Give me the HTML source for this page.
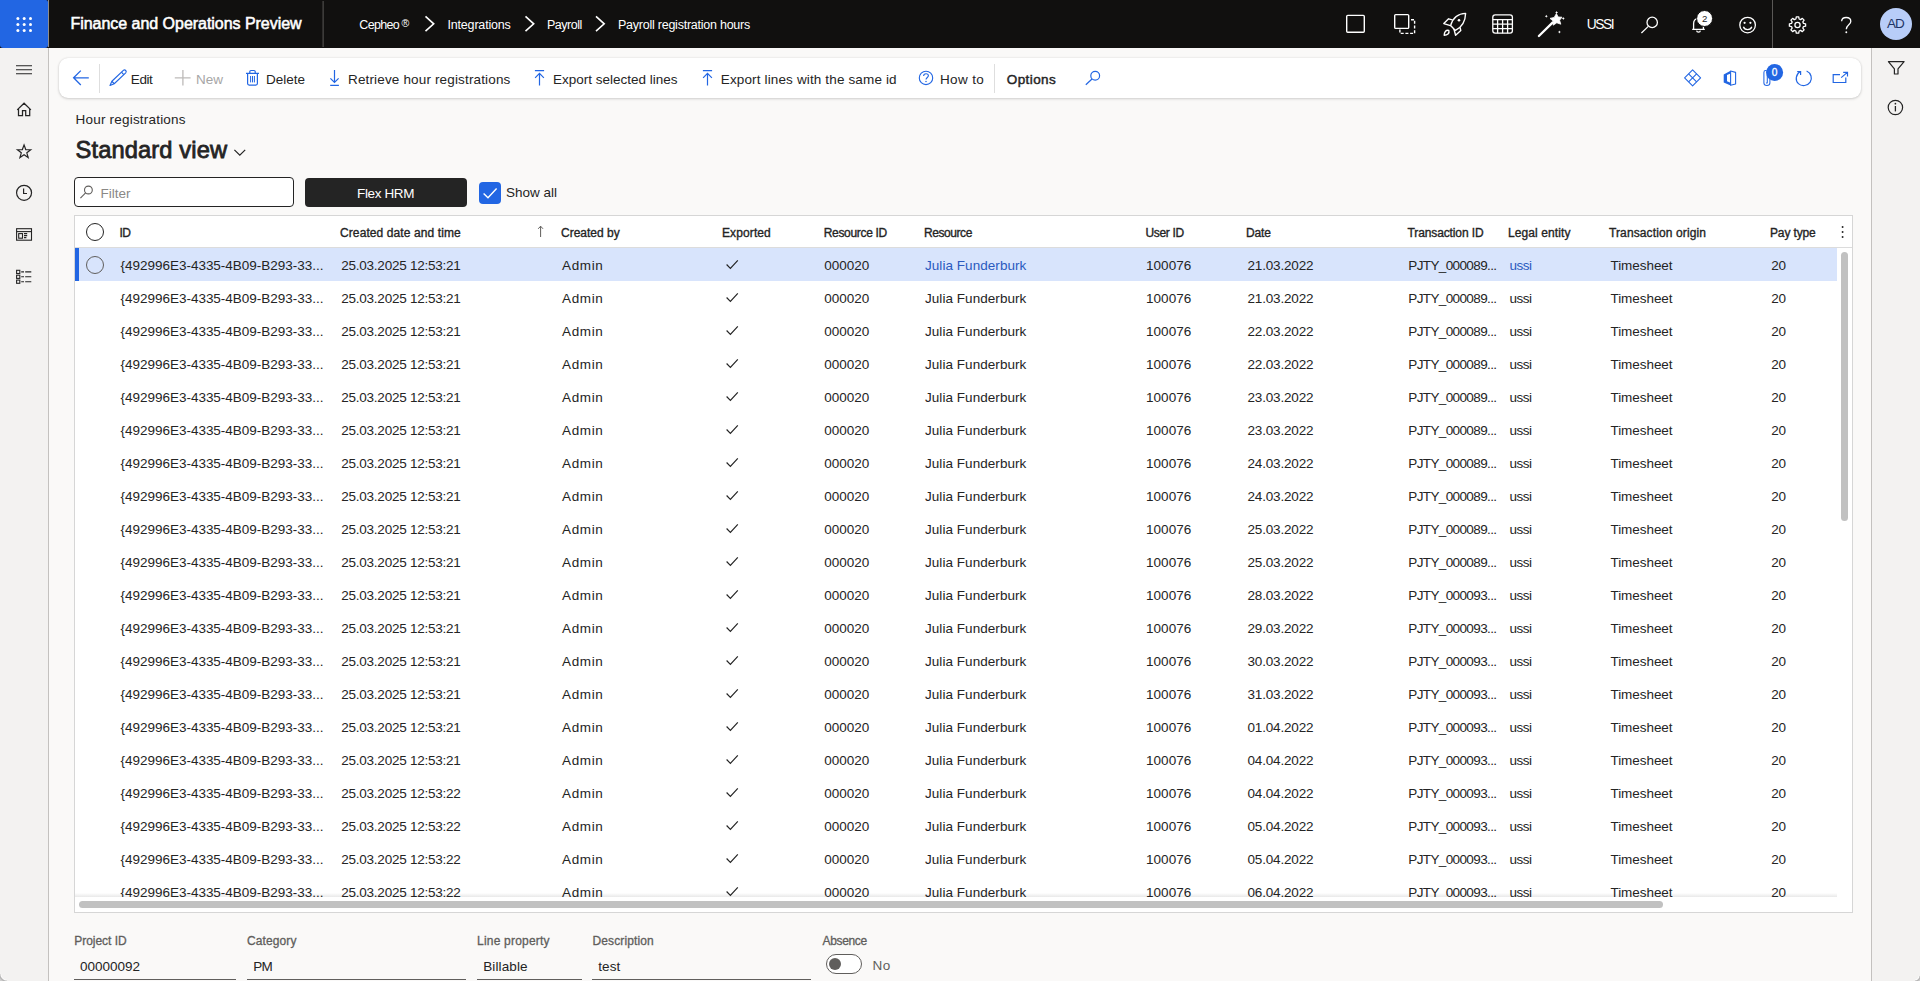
<!DOCTYPE html>
<html><head><meta charset="utf-8"><title>Payroll registration hours</title><style>
*{box-sizing:border-box;margin:0;padding:0}
html,body{width:1920px;height:981px;overflow:hidden}
body{position:relative;background:#faf9f8;font-family:"Liberation Sans", sans-serif;color:#242424}
.t{position:absolute;white-space:pre;line-height:1;display:block}
#hdr{position:absolute;left:0;top:0;width:1920px;height:48px;background:#11100f}
#waffle{position:absolute;left:0;top:0;width:48px;height:48px;background:#2266e3;border-radius:0 2px 3px 3px}
#nav{position:absolute;left:0;top:48px;width:49px;height:933px;background:#f3f2f1;border-right:1px solid #c3c1bf}
#rp{position:absolute;left:1871px;top:48px;width:49px;height:933px;background:#f3f2f1;border-left:1px solid #c3c1bf}
#tb{position:absolute;left:59px;top:58px;width:1802px;height:40px;background:#fff;border-radius:9px;box-shadow:0 1px 3px rgba(0,0,0,.16),0 0 2px rgba(0,0,0,.10)}
#filter{position:absolute;left:74px;top:177px;width:220px;height:30px;background:#fff;border:1px solid #242424;border-radius:4px}
#flex{position:absolute;left:304.5px;top:177.5px;width:162px;height:29px;background:#242424;border-radius:4px}
#cb{position:absolute;left:479px;top:182px;width:22px;height:22px;background:#2266e3;border-radius:4px}
#grid{position:absolute;left:74px;top:215px;width:1779px;height:698px;background:#fff;border:1px solid #d6d6d6}
#hline{position:absolute;left:75px;top:247px;width:1777px;height:1px;background:#dcdcdc}
#sel{position:absolute;left:75px;top:248px;width:1762px;height:33px;background:#d8e4fc}
#selbar{position:absolute;left:75px;top:248px;width:4px;height:33px;background:#2266e3}
#clip{position:absolute;left:0;top:0;width:1920px;height:897px;overflow:hidden}
#fade{position:absolute;left:75px;top:893px;width:1762px;height:4px;background:linear-gradient(#fff,#e9e9e9)}
#vs{position:absolute;left:1841px;top:252px;width:7px;height:269px;background:#c1c1c1;border-radius:4px}
#hs{position:absolute;left:79px;top:901px;width:1584px;height:7px;background:#c1c1c1;border-radius:4px}
.ul{position:absolute;top:979px;height:1px;background:#605e5c}
#tg{position:absolute;left:826px;top:954px;width:36px;height:20px;border:1px solid #605e5c;border-radius:10px;background:#fff}
#tgk{position:absolute;left:829px;top:958px;width:12px;height:12px;border-radius:6px;background:#605e5c}
#av{position:absolute;left:1880px;top:8px;width:32px;height:32px;border-radius:16px;background:#b8cdf8}
#cbl{position:absolute;left:0;top:974px;width:7px;height:7px;background:radial-gradient(circle at 100% 0,rgba(255,255,255,0) 5.4px,rgba(255,255,255,.8) 6px,rgba(150,150,150,.7) 7.2px,rgba(205,205,205,.95) 8.6px)}
#cbr{position:absolute;left:1915px;top:976px;width:5px;height:5px;background:radial-gradient(circle at 0 0,rgba(255,255,255,0) 3.2px,rgba(255,255,255,.8) 3.9px,rgba(150,150,150,.7) 5px,rgba(205,205,205,.95) 6.2px)}
#ov{position:absolute;left:0;top:0;width:1920px;height:981px;pointer-events:none}
</style></head>
<body>
<div id="hdr"><div id="waffle"></div></div>
<div id="nav"></div><div id="rp"></div>
<div id="tb"></div>
<div id="filter"></div><div id="flex"></div><div id="cb"></div>
<div id="grid"></div><div id="hline"></div><div id="sel"></div><div id="selbar"></div>
<div id="av"></div>
<div id="fade"></div>
<div id="clip"><span class="t" style="left:120.50px;top:258.57px;font-size:13.5px;letter-spacing:-0.017px;">{492996E3-4335-4B09-B293-33...</span><span class="t" style="left:341.25px;top:258.57px;font-size:13.5px;letter-spacing:-0.236px;">25.03.2025 12:53:21</span><span class="t" style="left:562.00px;top:258.57px;font-size:13.5px;letter-spacing:0.625px;">Admin</span><span class="t" style="left:824.25px;top:258.57px;font-size:13.5px;">000020</span><span class="t" style="left:925.00px;top:258.57px;font-size:13.5px;letter-spacing:0.050px;color:#2a5abf;">Julia Funderburk</span><span class="t" style="left:1146.00px;top:258.57px;font-size:13.5px;letter-spacing:0.050px;">100076</span><span class="t" style="left:1247.50px;top:258.57px;font-size:13.5px;letter-spacing:-0.167px;">21.03.2022</span><span class="t" style="left:1408.25px;top:258.57px;font-size:13.5px;letter-spacing:-0.615px;">PJTY_000089...</span><span class="t" style="left:1509.50px;top:258.57px;font-size:13.5px;letter-spacing:-0.500px;color:#2a5abf;">ussi</span><span class="t" style="left:1610.50px;top:258.57px;font-size:13.5px;letter-spacing:-0.062px;">Timesheet</span><span class="t" style="left:1771.25px;top:258.57px;font-size:13.5px;letter-spacing:-0.250px;">20</span><span class="t" style="left:120.50px;top:291.57px;font-size:13.5px;letter-spacing:-0.017px;">{492996E3-4335-4B09-B293-33...</span><span class="t" style="left:341.25px;top:291.57px;font-size:13.5px;letter-spacing:-0.236px;">25.03.2025 12:53:21</span><span class="t" style="left:562.00px;top:291.57px;font-size:13.5px;letter-spacing:0.625px;">Admin</span><span class="t" style="left:824.25px;top:291.57px;font-size:13.5px;">000020</span><span class="t" style="left:925.00px;top:291.57px;font-size:13.5px;letter-spacing:0.050px;">Julia Funderburk</span><span class="t" style="left:1146.00px;top:291.57px;font-size:13.5px;letter-spacing:0.050px;">100076</span><span class="t" style="left:1247.50px;top:291.57px;font-size:13.5px;letter-spacing:-0.167px;">21.03.2022</span><span class="t" style="left:1408.25px;top:291.57px;font-size:13.5px;letter-spacing:-0.615px;">PJTY_000089...</span><span class="t" style="left:1509.50px;top:291.57px;font-size:13.5px;letter-spacing:-0.500px;">ussi</span><span class="t" style="left:1610.50px;top:291.57px;font-size:13.5px;letter-spacing:-0.062px;">Timesheet</span><span class="t" style="left:1771.25px;top:291.57px;font-size:13.5px;letter-spacing:-0.250px;">20</span><span class="t" style="left:120.50px;top:324.57px;font-size:13.5px;letter-spacing:-0.017px;">{492996E3-4335-4B09-B293-33...</span><span class="t" style="left:341.25px;top:324.57px;font-size:13.5px;letter-spacing:-0.236px;">25.03.2025 12:53:21</span><span class="t" style="left:562.00px;top:324.57px;font-size:13.5px;letter-spacing:0.625px;">Admin</span><span class="t" style="left:824.25px;top:324.57px;font-size:13.5px;">000020</span><span class="t" style="left:925.00px;top:324.57px;font-size:13.5px;letter-spacing:0.050px;">Julia Funderburk</span><span class="t" style="left:1146.00px;top:324.57px;font-size:13.5px;letter-spacing:0.050px;">100076</span><span class="t" style="left:1247.50px;top:324.57px;font-size:13.5px;letter-spacing:-0.167px;">22.03.2022</span><span class="t" style="left:1408.25px;top:324.57px;font-size:13.5px;letter-spacing:-0.615px;">PJTY_000089...</span><span class="t" style="left:1509.50px;top:324.57px;font-size:13.5px;letter-spacing:-0.500px;">ussi</span><span class="t" style="left:1610.50px;top:324.57px;font-size:13.5px;letter-spacing:-0.062px;">Timesheet</span><span class="t" style="left:1771.25px;top:324.57px;font-size:13.5px;letter-spacing:-0.250px;">20</span><span class="t" style="left:120.50px;top:357.57px;font-size:13.5px;letter-spacing:-0.017px;">{492996E3-4335-4B09-B293-33...</span><span class="t" style="left:341.25px;top:357.57px;font-size:13.5px;letter-spacing:-0.236px;">25.03.2025 12:53:21</span><span class="t" style="left:562.00px;top:357.57px;font-size:13.5px;letter-spacing:0.625px;">Admin</span><span class="t" style="left:824.25px;top:357.57px;font-size:13.5px;">000020</span><span class="t" style="left:925.00px;top:357.57px;font-size:13.5px;letter-spacing:0.050px;">Julia Funderburk</span><span class="t" style="left:1146.00px;top:357.57px;font-size:13.5px;letter-spacing:0.050px;">100076</span><span class="t" style="left:1247.50px;top:357.57px;font-size:13.5px;letter-spacing:-0.167px;">22.03.2022</span><span class="t" style="left:1408.25px;top:357.57px;font-size:13.5px;letter-spacing:-0.615px;">PJTY_000089...</span><span class="t" style="left:1509.50px;top:357.57px;font-size:13.5px;letter-spacing:-0.500px;">ussi</span><span class="t" style="left:1610.50px;top:357.57px;font-size:13.5px;letter-spacing:-0.062px;">Timesheet</span><span class="t" style="left:1771.25px;top:357.57px;font-size:13.5px;letter-spacing:-0.250px;">20</span><span class="t" style="left:120.50px;top:390.57px;font-size:13.5px;letter-spacing:-0.017px;">{492996E3-4335-4B09-B293-33...</span><span class="t" style="left:341.25px;top:390.57px;font-size:13.5px;letter-spacing:-0.236px;">25.03.2025 12:53:21</span><span class="t" style="left:562.00px;top:390.57px;font-size:13.5px;letter-spacing:0.625px;">Admin</span><span class="t" style="left:824.25px;top:390.57px;font-size:13.5px;">000020</span><span class="t" style="left:925.00px;top:390.57px;font-size:13.5px;letter-spacing:0.050px;">Julia Funderburk</span><span class="t" style="left:1146.00px;top:390.57px;font-size:13.5px;letter-spacing:0.050px;">100076</span><span class="t" style="left:1247.50px;top:390.57px;font-size:13.5px;letter-spacing:-0.167px;">23.03.2022</span><span class="t" style="left:1408.25px;top:390.57px;font-size:13.5px;letter-spacing:-0.615px;">PJTY_000089...</span><span class="t" style="left:1509.50px;top:390.57px;font-size:13.5px;letter-spacing:-0.500px;">ussi</span><span class="t" style="left:1610.50px;top:390.57px;font-size:13.5px;letter-spacing:-0.062px;">Timesheet</span><span class="t" style="left:1771.25px;top:390.57px;font-size:13.5px;letter-spacing:-0.250px;">20</span><span class="t" style="left:120.50px;top:423.57px;font-size:13.5px;letter-spacing:-0.017px;">{492996E3-4335-4B09-B293-33...</span><span class="t" style="left:341.25px;top:423.57px;font-size:13.5px;letter-spacing:-0.236px;">25.03.2025 12:53:21</span><span class="t" style="left:562.00px;top:423.57px;font-size:13.5px;letter-spacing:0.625px;">Admin</span><span class="t" style="left:824.25px;top:423.57px;font-size:13.5px;">000020</span><span class="t" style="left:925.00px;top:423.57px;font-size:13.5px;letter-spacing:0.050px;">Julia Funderburk</span><span class="t" style="left:1146.00px;top:423.57px;font-size:13.5px;letter-spacing:0.050px;">100076</span><span class="t" style="left:1247.50px;top:423.57px;font-size:13.5px;letter-spacing:-0.167px;">23.03.2022</span><span class="t" style="left:1408.25px;top:423.57px;font-size:13.5px;letter-spacing:-0.615px;">PJTY_000089...</span><span class="t" style="left:1509.50px;top:423.57px;font-size:13.5px;letter-spacing:-0.500px;">ussi</span><span class="t" style="left:1610.50px;top:423.57px;font-size:13.5px;letter-spacing:-0.062px;">Timesheet</span><span class="t" style="left:1771.25px;top:423.57px;font-size:13.5px;letter-spacing:-0.250px;">20</span><span class="t" style="left:120.50px;top:456.57px;font-size:13.5px;letter-spacing:-0.017px;">{492996E3-4335-4B09-B293-33...</span><span class="t" style="left:341.25px;top:456.57px;font-size:13.5px;letter-spacing:-0.236px;">25.03.2025 12:53:21</span><span class="t" style="left:562.00px;top:456.57px;font-size:13.5px;letter-spacing:0.625px;">Admin</span><span class="t" style="left:824.25px;top:456.57px;font-size:13.5px;">000020</span><span class="t" style="left:925.00px;top:456.57px;font-size:13.5px;letter-spacing:0.050px;">Julia Funderburk</span><span class="t" style="left:1146.00px;top:456.57px;font-size:13.5px;letter-spacing:0.050px;">100076</span><span class="t" style="left:1247.50px;top:456.57px;font-size:13.5px;letter-spacing:-0.167px;">24.03.2022</span><span class="t" style="left:1408.25px;top:456.57px;font-size:13.5px;letter-spacing:-0.615px;">PJTY_000089...</span><span class="t" style="left:1509.50px;top:456.57px;font-size:13.5px;letter-spacing:-0.500px;">ussi</span><span class="t" style="left:1610.50px;top:456.57px;font-size:13.5px;letter-spacing:-0.062px;">Timesheet</span><span class="t" style="left:1771.25px;top:456.57px;font-size:13.5px;letter-spacing:-0.250px;">20</span><span class="t" style="left:120.50px;top:489.57px;font-size:13.5px;letter-spacing:-0.017px;">{492996E3-4335-4B09-B293-33...</span><span class="t" style="left:341.25px;top:489.57px;font-size:13.5px;letter-spacing:-0.236px;">25.03.2025 12:53:21</span><span class="t" style="left:562.00px;top:489.57px;font-size:13.5px;letter-spacing:0.625px;">Admin</span><span class="t" style="left:824.25px;top:489.57px;font-size:13.5px;">000020</span><span class="t" style="left:925.00px;top:489.57px;font-size:13.5px;letter-spacing:0.050px;">Julia Funderburk</span><span class="t" style="left:1146.00px;top:489.57px;font-size:13.5px;letter-spacing:0.050px;">100076</span><span class="t" style="left:1247.50px;top:489.57px;font-size:13.5px;letter-spacing:-0.167px;">24.03.2022</span><span class="t" style="left:1408.25px;top:489.57px;font-size:13.5px;letter-spacing:-0.615px;">PJTY_000089...</span><span class="t" style="left:1509.50px;top:489.57px;font-size:13.5px;letter-spacing:-0.500px;">ussi</span><span class="t" style="left:1610.50px;top:489.57px;font-size:13.5px;letter-spacing:-0.062px;">Timesheet</span><span class="t" style="left:1771.25px;top:489.57px;font-size:13.5px;letter-spacing:-0.250px;">20</span><span class="t" style="left:120.50px;top:522.57px;font-size:13.5px;letter-spacing:-0.017px;">{492996E3-4335-4B09-B293-33...</span><span class="t" style="left:341.25px;top:522.57px;font-size:13.5px;letter-spacing:-0.236px;">25.03.2025 12:53:21</span><span class="t" style="left:562.00px;top:522.57px;font-size:13.5px;letter-spacing:0.625px;">Admin</span><span class="t" style="left:824.25px;top:522.57px;font-size:13.5px;">000020</span><span class="t" style="left:925.00px;top:522.57px;font-size:13.5px;letter-spacing:0.050px;">Julia Funderburk</span><span class="t" style="left:1146.00px;top:522.57px;font-size:13.5px;letter-spacing:0.050px;">100076</span><span class="t" style="left:1247.50px;top:522.57px;font-size:13.5px;letter-spacing:-0.167px;">25.03.2022</span><span class="t" style="left:1408.25px;top:522.57px;font-size:13.5px;letter-spacing:-0.615px;">PJTY_000089...</span><span class="t" style="left:1509.50px;top:522.57px;font-size:13.5px;letter-spacing:-0.500px;">ussi</span><span class="t" style="left:1610.50px;top:522.57px;font-size:13.5px;letter-spacing:-0.062px;">Timesheet</span><span class="t" style="left:1771.25px;top:522.57px;font-size:13.5px;letter-spacing:-0.250px;">20</span><span class="t" style="left:120.50px;top:555.57px;font-size:13.5px;letter-spacing:-0.017px;">{492996E3-4335-4B09-B293-33...</span><span class="t" style="left:341.25px;top:555.57px;font-size:13.5px;letter-spacing:-0.236px;">25.03.2025 12:53:21</span><span class="t" style="left:562.00px;top:555.57px;font-size:13.5px;letter-spacing:0.625px;">Admin</span><span class="t" style="left:824.25px;top:555.57px;font-size:13.5px;">000020</span><span class="t" style="left:925.00px;top:555.57px;font-size:13.5px;letter-spacing:0.050px;">Julia Funderburk</span><span class="t" style="left:1146.00px;top:555.57px;font-size:13.5px;letter-spacing:0.050px;">100076</span><span class="t" style="left:1247.50px;top:555.57px;font-size:13.5px;letter-spacing:-0.167px;">25.03.2022</span><span class="t" style="left:1408.25px;top:555.57px;font-size:13.5px;letter-spacing:-0.615px;">PJTY_000089...</span><span class="t" style="left:1509.50px;top:555.57px;font-size:13.5px;letter-spacing:-0.500px;">ussi</span><span class="t" style="left:1610.50px;top:555.57px;font-size:13.5px;letter-spacing:-0.062px;">Timesheet</span><span class="t" style="left:1771.25px;top:555.57px;font-size:13.5px;letter-spacing:-0.250px;">20</span><span class="t" style="left:120.50px;top:588.57px;font-size:13.5px;letter-spacing:-0.017px;">{492996E3-4335-4B09-B293-33...</span><span class="t" style="left:341.25px;top:588.57px;font-size:13.5px;letter-spacing:-0.236px;">25.03.2025 12:53:21</span><span class="t" style="left:562.00px;top:588.57px;font-size:13.5px;letter-spacing:0.625px;">Admin</span><span class="t" style="left:824.25px;top:588.57px;font-size:13.5px;">000020</span><span class="t" style="left:925.00px;top:588.57px;font-size:13.5px;letter-spacing:0.050px;">Julia Funderburk</span><span class="t" style="left:1146.00px;top:588.57px;font-size:13.5px;letter-spacing:0.050px;">100076</span><span class="t" style="left:1247.50px;top:588.57px;font-size:13.5px;letter-spacing:-0.167px;">28.03.2022</span><span class="t" style="left:1408.25px;top:588.57px;font-size:13.5px;letter-spacing:-0.615px;">PJTY_000093...</span><span class="t" style="left:1509.50px;top:588.57px;font-size:13.5px;letter-spacing:-0.500px;">ussi</span><span class="t" style="left:1610.50px;top:588.57px;font-size:13.5px;letter-spacing:-0.062px;">Timesheet</span><span class="t" style="left:1771.25px;top:588.57px;font-size:13.5px;letter-spacing:-0.250px;">20</span><span class="t" style="left:120.50px;top:621.57px;font-size:13.5px;letter-spacing:-0.017px;">{492996E3-4335-4B09-B293-33...</span><span class="t" style="left:341.25px;top:621.57px;font-size:13.5px;letter-spacing:-0.236px;">25.03.2025 12:53:21</span><span class="t" style="left:562.00px;top:621.57px;font-size:13.5px;letter-spacing:0.625px;">Admin</span><span class="t" style="left:824.25px;top:621.57px;font-size:13.5px;">000020</span><span class="t" style="left:925.00px;top:621.57px;font-size:13.5px;letter-spacing:0.050px;">Julia Funderburk</span><span class="t" style="left:1146.00px;top:621.57px;font-size:13.5px;letter-spacing:0.050px;">100076</span><span class="t" style="left:1247.50px;top:621.57px;font-size:13.5px;letter-spacing:-0.167px;">29.03.2022</span><span class="t" style="left:1408.25px;top:621.57px;font-size:13.5px;letter-spacing:-0.615px;">PJTY_000093...</span><span class="t" style="left:1509.50px;top:621.57px;font-size:13.5px;letter-spacing:-0.500px;">ussi</span><span class="t" style="left:1610.50px;top:621.57px;font-size:13.5px;letter-spacing:-0.062px;">Timesheet</span><span class="t" style="left:1771.25px;top:621.57px;font-size:13.5px;letter-spacing:-0.250px;">20</span><span class="t" style="left:120.50px;top:654.57px;font-size:13.5px;letter-spacing:-0.017px;">{492996E3-4335-4B09-B293-33...</span><span class="t" style="left:341.25px;top:654.57px;font-size:13.5px;letter-spacing:-0.236px;">25.03.2025 12:53:21</span><span class="t" style="left:562.00px;top:654.57px;font-size:13.5px;letter-spacing:0.625px;">Admin</span><span class="t" style="left:824.25px;top:654.57px;font-size:13.5px;">000020</span><span class="t" style="left:925.00px;top:654.57px;font-size:13.5px;letter-spacing:0.050px;">Julia Funderburk</span><span class="t" style="left:1146.00px;top:654.57px;font-size:13.5px;letter-spacing:0.050px;">100076</span><span class="t" style="left:1247.50px;top:654.57px;font-size:13.5px;letter-spacing:-0.167px;">30.03.2022</span><span class="t" style="left:1408.25px;top:654.57px;font-size:13.5px;letter-spacing:-0.615px;">PJTY_000093...</span><span class="t" style="left:1509.50px;top:654.57px;font-size:13.5px;letter-spacing:-0.500px;">ussi</span><span class="t" style="left:1610.50px;top:654.57px;font-size:13.5px;letter-spacing:-0.062px;">Timesheet</span><span class="t" style="left:1771.25px;top:654.57px;font-size:13.5px;letter-spacing:-0.250px;">20</span><span class="t" style="left:120.50px;top:687.57px;font-size:13.5px;letter-spacing:-0.017px;">{492996E3-4335-4B09-B293-33...</span><span class="t" style="left:341.25px;top:687.57px;font-size:13.5px;letter-spacing:-0.236px;">25.03.2025 12:53:21</span><span class="t" style="left:562.00px;top:687.57px;font-size:13.5px;letter-spacing:0.625px;">Admin</span><span class="t" style="left:824.25px;top:687.57px;font-size:13.5px;">000020</span><span class="t" style="left:925.00px;top:687.57px;font-size:13.5px;letter-spacing:0.050px;">Julia Funderburk</span><span class="t" style="left:1146.00px;top:687.57px;font-size:13.5px;letter-spacing:0.050px;">100076</span><span class="t" style="left:1247.50px;top:687.57px;font-size:13.5px;letter-spacing:-0.167px;">31.03.2022</span><span class="t" style="left:1408.25px;top:687.57px;font-size:13.5px;letter-spacing:-0.615px;">PJTY_000093...</span><span class="t" style="left:1509.50px;top:687.57px;font-size:13.5px;letter-spacing:-0.500px;">ussi</span><span class="t" style="left:1610.50px;top:687.57px;font-size:13.5px;letter-spacing:-0.062px;">Timesheet</span><span class="t" style="left:1771.25px;top:687.57px;font-size:13.5px;letter-spacing:-0.250px;">20</span><span class="t" style="left:120.50px;top:720.57px;font-size:13.5px;letter-spacing:-0.017px;">{492996E3-4335-4B09-B293-33...</span><span class="t" style="left:341.25px;top:720.57px;font-size:13.5px;letter-spacing:-0.236px;">25.03.2025 12:53:21</span><span class="t" style="left:562.00px;top:720.57px;font-size:13.5px;letter-spacing:0.625px;">Admin</span><span class="t" style="left:824.25px;top:720.57px;font-size:13.5px;">000020</span><span class="t" style="left:925.00px;top:720.57px;font-size:13.5px;letter-spacing:0.050px;">Julia Funderburk</span><span class="t" style="left:1146.00px;top:720.57px;font-size:13.5px;letter-spacing:0.050px;">100076</span><span class="t" style="left:1247.50px;top:720.57px;font-size:13.5px;letter-spacing:-0.167px;">01.04.2022</span><span class="t" style="left:1408.25px;top:720.57px;font-size:13.5px;letter-spacing:-0.615px;">PJTY_000093...</span><span class="t" style="left:1509.50px;top:720.57px;font-size:13.5px;letter-spacing:-0.500px;">ussi</span><span class="t" style="left:1610.50px;top:720.57px;font-size:13.5px;letter-spacing:-0.062px;">Timesheet</span><span class="t" style="left:1771.25px;top:720.57px;font-size:13.5px;letter-spacing:-0.250px;">20</span><span class="t" style="left:120.50px;top:753.57px;font-size:13.5px;letter-spacing:-0.017px;">{492996E3-4335-4B09-B293-33...</span><span class="t" style="left:341.25px;top:753.57px;font-size:13.5px;letter-spacing:-0.236px;">25.03.2025 12:53:21</span><span class="t" style="left:562.00px;top:753.57px;font-size:13.5px;letter-spacing:0.625px;">Admin</span><span class="t" style="left:824.25px;top:753.57px;font-size:13.5px;">000020</span><span class="t" style="left:925.00px;top:753.57px;font-size:13.5px;letter-spacing:0.050px;">Julia Funderburk</span><span class="t" style="left:1146.00px;top:753.57px;font-size:13.5px;letter-spacing:0.050px;">100076</span><span class="t" style="left:1247.50px;top:753.57px;font-size:13.5px;letter-spacing:-0.167px;">04.04.2022</span><span class="t" style="left:1408.25px;top:753.57px;font-size:13.5px;letter-spacing:-0.615px;">PJTY_000093...</span><span class="t" style="left:1509.50px;top:753.57px;font-size:13.5px;letter-spacing:-0.500px;">ussi</span><span class="t" style="left:1610.50px;top:753.57px;font-size:13.5px;letter-spacing:-0.062px;">Timesheet</span><span class="t" style="left:1771.25px;top:753.57px;font-size:13.5px;letter-spacing:-0.250px;">20</span><span class="t" style="left:120.50px;top:786.57px;font-size:13.5px;letter-spacing:-0.017px;">{492996E3-4335-4B09-B293-33...</span><span class="t" style="left:341.25px;top:786.57px;font-size:13.5px;letter-spacing:-0.236px;">25.03.2025 12:53:22</span><span class="t" style="left:562.00px;top:786.57px;font-size:13.5px;letter-spacing:0.625px;">Admin</span><span class="t" style="left:824.25px;top:786.57px;font-size:13.5px;">000020</span><span class="t" style="left:925.00px;top:786.57px;font-size:13.5px;letter-spacing:0.050px;">Julia Funderburk</span><span class="t" style="left:1146.00px;top:786.57px;font-size:13.5px;letter-spacing:0.050px;">100076</span><span class="t" style="left:1247.50px;top:786.57px;font-size:13.5px;letter-spacing:-0.167px;">04.04.2022</span><span class="t" style="left:1408.25px;top:786.57px;font-size:13.5px;letter-spacing:-0.615px;">PJTY_000093...</span><span class="t" style="left:1509.50px;top:786.57px;font-size:13.5px;letter-spacing:-0.500px;">ussi</span><span class="t" style="left:1610.50px;top:786.57px;font-size:13.5px;letter-spacing:-0.062px;">Timesheet</span><span class="t" style="left:1771.25px;top:786.57px;font-size:13.5px;letter-spacing:-0.250px;">20</span><span class="t" style="left:120.50px;top:819.57px;font-size:13.5px;letter-spacing:-0.017px;">{492996E3-4335-4B09-B293-33...</span><span class="t" style="left:341.25px;top:819.57px;font-size:13.5px;letter-spacing:-0.236px;">25.03.2025 12:53:22</span><span class="t" style="left:562.00px;top:819.57px;font-size:13.5px;letter-spacing:0.625px;">Admin</span><span class="t" style="left:824.25px;top:819.57px;font-size:13.5px;">000020</span><span class="t" style="left:925.00px;top:819.57px;font-size:13.5px;letter-spacing:0.050px;">Julia Funderburk</span><span class="t" style="left:1146.00px;top:819.57px;font-size:13.5px;letter-spacing:0.050px;">100076</span><span class="t" style="left:1247.50px;top:819.57px;font-size:13.5px;letter-spacing:-0.167px;">05.04.2022</span><span class="t" style="left:1408.25px;top:819.57px;font-size:13.5px;letter-spacing:-0.615px;">PJTY_000093...</span><span class="t" style="left:1509.50px;top:819.57px;font-size:13.5px;letter-spacing:-0.500px;">ussi</span><span class="t" style="left:1610.50px;top:819.57px;font-size:13.5px;letter-spacing:-0.062px;">Timesheet</span><span class="t" style="left:1771.25px;top:819.57px;font-size:13.5px;letter-spacing:-0.250px;">20</span><span class="t" style="left:120.50px;top:852.57px;font-size:13.5px;letter-spacing:-0.017px;">{492996E3-4335-4B09-B293-33...</span><span class="t" style="left:341.25px;top:852.57px;font-size:13.5px;letter-spacing:-0.236px;">25.03.2025 12:53:22</span><span class="t" style="left:562.00px;top:852.57px;font-size:13.5px;letter-spacing:0.625px;">Admin</span><span class="t" style="left:824.25px;top:852.57px;font-size:13.5px;">000020</span><span class="t" style="left:925.00px;top:852.57px;font-size:13.5px;letter-spacing:0.050px;">Julia Funderburk</span><span class="t" style="left:1146.00px;top:852.57px;font-size:13.5px;letter-spacing:0.050px;">100076</span><span class="t" style="left:1247.50px;top:852.57px;font-size:13.5px;letter-spacing:-0.167px;">05.04.2022</span><span class="t" style="left:1408.25px;top:852.57px;font-size:13.5px;letter-spacing:-0.615px;">PJTY_000093...</span><span class="t" style="left:1509.50px;top:852.57px;font-size:13.5px;letter-spacing:-0.500px;">ussi</span><span class="t" style="left:1610.50px;top:852.57px;font-size:13.5px;letter-spacing:-0.062px;">Timesheet</span><span class="t" style="left:1771.25px;top:852.57px;font-size:13.5px;letter-spacing:-0.250px;">20</span><span class="t" style="left:120.50px;top:885.57px;font-size:13.5px;letter-spacing:-0.017px;">{492996E3-4335-4B09-B293-33...</span><span class="t" style="left:341.25px;top:885.57px;font-size:13.5px;letter-spacing:-0.236px;">25.03.2025 12:53:22</span><span class="t" style="left:562.00px;top:885.57px;font-size:13.5px;letter-spacing:0.625px;">Admin</span><span class="t" style="left:824.25px;top:885.57px;font-size:13.5px;">000020</span><span class="t" style="left:925.00px;top:885.57px;font-size:13.5px;letter-spacing:0.050px;">Julia Funderburk</span><span class="t" style="left:1146.00px;top:885.57px;font-size:13.5px;letter-spacing:0.050px;">100076</span><span class="t" style="left:1247.50px;top:885.57px;font-size:13.5px;letter-spacing:-0.167px;">06.04.2022</span><span class="t" style="left:1408.25px;top:885.57px;font-size:13.5px;letter-spacing:-0.615px;">PJTY_000093...</span><span class="t" style="left:1509.50px;top:885.57px;font-size:13.5px;letter-spacing:-0.500px;">ussi</span><span class="t" style="left:1610.50px;top:885.57px;font-size:13.5px;letter-spacing:-0.062px;">Timesheet</span><span class="t" style="left:1771.25px;top:885.57px;font-size:13.5px;letter-spacing:-0.250px;">20</span><svg style="position:absolute;left:0;top:0" width="1920" height="981" viewBox="0 0 1920 981"><path d="M726.6,264.5 L730.4,268.3 L737.8,260.3" fill="none" stroke="#242424" stroke-width="1.2"/><path d="M726.6,297.5 L730.4,301.3 L737.8,293.3" fill="none" stroke="#242424" stroke-width="1.2"/><path d="M726.6,330.5 L730.4,334.3 L737.8,326.3" fill="none" stroke="#242424" stroke-width="1.2"/><path d="M726.6,363.5 L730.4,367.3 L737.8,359.3" fill="none" stroke="#242424" stroke-width="1.2"/><path d="M726.6,396.5 L730.4,400.3 L737.8,392.3" fill="none" stroke="#242424" stroke-width="1.2"/><path d="M726.6,429.5 L730.4,433.3 L737.8,425.3" fill="none" stroke="#242424" stroke-width="1.2"/><path d="M726.6,462.5 L730.4,466.3 L737.8,458.3" fill="none" stroke="#242424" stroke-width="1.2"/><path d="M726.6,495.5 L730.4,499.3 L737.8,491.3" fill="none" stroke="#242424" stroke-width="1.2"/><path d="M726.6,528.5 L730.4,532.3 L737.8,524.3" fill="none" stroke="#242424" stroke-width="1.2"/><path d="M726.6,561.5 L730.4,565.3 L737.8,557.3" fill="none" stroke="#242424" stroke-width="1.2"/><path d="M726.6,594.5 L730.4,598.3 L737.8,590.3" fill="none" stroke="#242424" stroke-width="1.2"/><path d="M726.6,627.5 L730.4,631.3 L737.8,623.3" fill="none" stroke="#242424" stroke-width="1.2"/><path d="M726.6,660.5 L730.4,664.3 L737.8,656.3" fill="none" stroke="#242424" stroke-width="1.2"/><path d="M726.6,693.5 L730.4,697.3 L737.8,689.3" fill="none" stroke="#242424" stroke-width="1.2"/><path d="M726.6,726.5 L730.4,730.3 L737.8,722.3" fill="none" stroke="#242424" stroke-width="1.2"/><path d="M726.6,759.5 L730.4,763.3 L737.8,755.3" fill="none" stroke="#242424" stroke-width="1.2"/><path d="M726.6,792.5 L730.4,796.3 L737.8,788.3" fill="none" stroke="#242424" stroke-width="1.2"/><path d="M726.6,825.5 L730.4,829.3 L737.8,821.3" fill="none" stroke="#242424" stroke-width="1.2"/><path d="M726.6,858.5 L730.4,862.3 L737.8,854.3" fill="none" stroke="#242424" stroke-width="1.2"/><path d="M726.6,891.5 L730.4,895.3 L737.8,887.3" fill="none" stroke="#242424" stroke-width="1.2"/></svg></div>
<div id="vs"></div><div id="hs"></div>
<div class="ul" style="left:74px;width:162px"></div><div class="ul" style="left:247px;width:219px"></div><div class="ul" style="left:477px;width:105px"></div><div class="ul" style="left:592px;width:219px"></div>
<div id="cbl"></div><div id="cbr"></div><div id="tg"></div><div id="tgk"></div>
<svg id="ov" width="1920" height="981" viewBox="0 0 1920 981"><circle cx="17.9" cy="18.6" r="1.5" fill="#fff"/><circle cx="17.9" cy="24.6" r="1.5" fill="#fff"/><circle cx="17.9" cy="30.6" r="1.5" fill="#fff"/><circle cx="24.2" cy="18.6" r="1.5" fill="#fff"/><circle cx="24.2" cy="24.6" r="1.5" fill="#fff"/><circle cx="24.2" cy="30.6" r="1.5" fill="#fff"/><circle cx="30.5" cy="18.6" r="1.5" fill="#fff"/><circle cx="30.5" cy="24.6" r="1.5" fill="#fff"/><circle cx="30.5" cy="30.6" r="1.5" fill="#fff"/><rect x="48" y="0" width="1" height="47" fill="#8f8d8b"/><rect x="322.6" y="1" width="1" height="46" fill="#5a5856"/><rect x="1772" y="0" width="1" height="48" fill="#5a5856"/><path d="M425.5,16.4 L433.7,23.8 L425.5,31.2" fill="none" stroke="#fff" stroke-width="1.6"/><path d="M525.5,16.4 L533.7,23.8 L525.5,31.2" fill="none" stroke="#fff" stroke-width="1.6"/><path d="M596,16.4 L604.2,23.8 L596,31.2" fill="none" stroke="#fff" stroke-width="1.6"/><rect x="1346.7" y="15.4" width="17.6" height="16.8" rx="1" fill="none" stroke="#fff" stroke-width="1.4"/><rect x="1394.7" y="14.6" width="14" height="13.8" rx="1" fill="none" stroke="#fff" stroke-width="1.4"/><path d="M1411,19.7 H1414.6 V33.4 H1399.9 V29.4" fill="none" stroke="#fff" stroke-width="1.4" stroke-dasharray="3 1.7"/><g fill="none" stroke="#fff" stroke-width="1.4" stroke-linejoin="round" stroke-linecap="round"><path d="M1465.6,13.4 C1458.5,13.6 1453,17.5 1450.6,25.6 L1455.4,30.4 C1462,27 1465.4,20.8 1465.6,13.4 Z"/><path d="M1452.2,19.8 L1448.6,18.8 L1443.8,23.6 L1450.4,25.6"/><path d="M1460.2,28 L1460.8,30.6 L1455.6,35.2 L1454,29.4"/><path d="M1448.8,30.4 C1446.2,29.6 1444.2,32 1444.2,35.2 C1447.2,35.2 1449.8,33.4 1448.8,30.4 Z"/></g><circle cx="1459" cy="20.2" r="1.3" fill="#fff"/><g fill="none" stroke="#fff" stroke-width="1.3"><rect x="1492.8" y="14.8" width="19.6" height="18.4" rx="2.4"/><path d="M1492.8,19.6 H1512.4 M1492.8,24.2 H1512.4 M1492.8,28.7 H1512.4 M1497.6,19.6 V33.2 M1502.6,19.6 V33.2 M1507.6,19.6 V33.2"/></g><path d="M1538.9,36 L1552.8,22.4" stroke="#fff" stroke-width="2.3" fill="none" stroke-linecap="round"/><path d="M1556.4,13.6 L1558.2,17 L1562,17.2 L1559.6,20.2 L1560.8,24.2 L1556.8,22.8 L1553.2,25.2 L1553.2,21 L1550,18.4 L1554.2,17.4 Z" fill="#fff" stroke="#fff" stroke-width="0.8" stroke-linejoin="round"/><path d="M1556.6,10.9 L1557.1,11.9 L1558.1,12.4 L1557.1,12.9 L1556.6,13.9 L1556.1,12.9 L1555.1,12.4 L1556.1,11.9 Z" fill="#fff"/><path d="M1546.3,14.8 L1546.8,15.8 L1547.8,16.3 L1546.8,16.8 L1546.3,17.8 L1545.8,16.8 L1544.8,16.3 L1545.8,15.8 Z" fill="#fff"/><path d="M1563.3,17.1 L1563.8,18.1 L1564.8,18.6 L1563.8,19.1 L1563.3,20.1 L1562.8,19.1 L1561.8,18.6 L1562.8,18.1 Z" fill="#fff"/><path d="M1559.4,30.4 L1559.9,31.4 L1560.9,31.9 L1559.9,32.4 L1559.4,33.4 L1558.9,32.4 L1557.9,31.9 L1558.9,31.4 Z" fill="#fff"/><circle cx="1652.2" cy="22.4" r="5.2" fill="none" stroke="#fff" stroke-width="1.3"/><path d="M1648.3,26.4 L1641.4,33" stroke="#fff" stroke-width="1.3" fill="none"/><path d="M1692.2,29.4 H1704.8 M1693.6,29.4 V23.6 C1693.6,20.4 1695.6,18.6 1698.5,18.6 C1701.4,18.6 1703.4,20.4 1703.4,23.6 V29.4" fill="none" stroke="#fff" stroke-width="1.3"/><path d="M1696.6,30.6 C1696.8,32.6 1700.2,32.6 1700.4,30.6" fill="none" stroke="#fff" stroke-width="1.2"/><circle cx="1704.6" cy="18.5" r="8" fill="#fff" stroke="#11100f" stroke-width="1"/><circle cx="1747.6" cy="25.1" r="7.8" fill="none" stroke="#fff" stroke-width="1.3"/><circle cx="1744.6" cy="22.8" r="1.1" fill="#fff"/><circle cx="1750.4" cy="22.8" r="1.1" fill="#fff"/><path d="M1743.4,26.8 C1744.6,30.6 1750.6,30.6 1751.8,26.8" fill="none" stroke="#fff" stroke-width="1.3"/><path d="M1803.49,23.41 L1805.61,23.77 L1805.61,26.23 L1803.49,26.59 L1802.86,28.11 L1804.10,29.87 L1802.37,31.60 L1800.61,30.36 L1799.09,30.99 L1798.73,33.11 L1796.27,33.11 L1795.91,30.99 L1794.39,30.36 L1792.63,31.60 L1790.90,29.87 L1792.14,28.11 L1791.51,26.59 L1789.39,26.23 L1789.39,23.77 L1791.51,23.41 L1792.14,21.89 L1790.90,20.13 L1792.63,18.40 L1794.39,19.64 L1795.91,19.01 L1796.27,16.89 L1798.73,16.89 L1799.09,19.01 L1800.61,19.64 L1802.37,18.40 L1804.10,20.13 L1802.86,21.89 Z" fill="none" stroke="#fff" stroke-width="1.3" stroke-linejoin="round"/><circle cx="1797.5" cy="25" r="2.6" fill="none" stroke="#fff" stroke-width="1.3"/><path d="M1841.6,21.2 C1841.8,18.6 1843.8,17.5 1846.2,17.5 C1848.8,17.5 1850.8,19 1850.8,21.4 C1850.8,24.6 1846.3,25 1846.3,29.2" fill="none" stroke="#fff" stroke-width="1.3"/><circle cx="1846.3" cy="32.3" r="0.95" fill="#fff"/><path d="M16,65.8 H32 M16,69.8 H32 M16,73.8 H32" stroke="#242424" stroke-width="1.1" fill="none"/><path d="M17.2,109.9 L24.06,103.2 L30.9,109.9 M18.5,108.9 V115.5 H22.5 V110.6 H25.7 V115.5 H29.7 V108.9" fill="none" stroke="#242424" stroke-width="1.25"/><path d="M24.06,144.90 L25.76,149.55 L30.72,149.74 L26.82,152.80 L28.17,157.56 L24.06,154.80 L19.95,157.56 L21.30,152.80 L17.40,149.74 L22.36,149.55 Z" fill="none" stroke="#242424" stroke-width="1.2" stroke-linejoin="miter"/><circle cx="24.06" cy="192.8" r="7.5" fill="none" stroke="#242424" stroke-width="1.2"/><path d="M23.6,188.4 V193.5 H27" fill="none" stroke="#242424" stroke-width="1.2"/><g fill="none" stroke="#242424" stroke-width="1.1"><rect x="16.6" y="228.7" width="14.9" height="11.5"/><path d="M16.6,231.6 H31.5"/><rect x="18.7" y="233.6" width="3.8" height="4.6"/><path d="M24,233.6 H27.2 M24,235.6 H27.2 M24,237.6 H26.4"/></g><rect x="16.6" y="270.29999999999995" width="3.2" height="3.2" fill="none" stroke="#242424" stroke-width="1.1"/><path d="M21.2,271.9 H24 M25.2,271.9 H31.3" stroke="#242424" stroke-width="1.1"/><rect x="16.6" y="275.2" width="3.2" height="3.2" fill="none" stroke="#242424" stroke-width="1.1"/><path d="M21.2,276.8 H24 M25.2,276.8 H31.3" stroke="#242424" stroke-width="1.1"/><rect x="16.6" y="280.09999999999997" width="3.2" height="3.2" fill="none" stroke="#242424" stroke-width="1.1"/><path d="M21.2,281.7 H24 M25.2,281.7 H31.3" stroke="#242424" stroke-width="1.1"/><path d="M1888.4,61.6 H1904.1 L1898,68.9 V74 H1894.4 V68.9 Z" fill="none" stroke="#242424" stroke-width="1.2" stroke-linejoin="round"/><circle cx="1895.4" cy="107.5" r="7.2" fill="none" stroke="#242424" stroke-width="1.2"/><path d="M1895.4,106 V111.4" stroke="#242424" stroke-width="1.3"/><circle cx="1895.4" cy="103.7" r="0.85" fill="#242424"/><path d="M88.8,77.8 H73.6 M80.8,70.6 L73.6,77.8 L80.8,85" fill="none" stroke="#2266e3" stroke-width="1.3"/><rect x="99" y="64" width="1" height="29" fill="#dedede"/><rect x="994" y="64" width="1" height="29" fill="#dedede"/><g fill="none" stroke="#2266e3" stroke-width="1.15" stroke-linejoin="round"><path d="M110,85.5 L111.9,81.25 L123.35,70.4 A1.7,1.7 0 0 1 125.7,72.85 L114.2,83.75 Z"/><path d="M111.9,81.25 L114.2,83.75 M121.45,72.2 L123.8,74.65"/></g><path d="M182.9,70 V85.6 M174.8,77.8 H190.6" stroke="#bdbbb9" stroke-width="1.3" fill="none"/><g fill="none" stroke="#2266e3" stroke-width="1.2"><path d="M246,73.4 H259 M249.8,73.4 V71.6 C249.8,70.9 250.3,70.5 251,70.5 H254 C254.7,70.5 255.2,70.9 255.2,71.6 V73.4 M247.6,73.4 V83.6 C247.6,84.6 248.2,85.1 249.2,85.1 H255.8 C256.8,85.1 257.4,84.6 257.4,83.6 V73.4"/><path d="M250.6,76 V82.4 M252.5,76 V82.4 M254.4,76 V82.4" stroke-width="1"/></g><path d="M334.5,70 V82.4 M330.4,78.4 L334.5,82.5 L338.6,78.4 M330.2,85.3 H338.9" fill="none" stroke="#2266e3" stroke-width="1.2"/><path d="M539.5,85.5 V73.4 M535.1,77.8 L539.5,73.4 L543.9,77.8 M534.9,70.6 H544.1" fill="none" stroke="#2266e3" stroke-width="1.2"/><path d="M707.5,85.5 V73.4 M703.1,77.8 L707.5,73.4 L711.9,77.8 M702.9,70.6 H712.1" fill="none" stroke="#2266e3" stroke-width="1.2"/><circle cx="926" cy="77.9" r="6.7" fill="none" stroke="#2266e3" stroke-width="1.1"/><path d="M923.6,76 C923.7,74.4 924.8,73.8 926,73.8 C927.4,73.8 928.4,74.6 928.4,75.8 C928.4,77.4 926,77.6 926,79.6" fill="none" stroke="#2266e3" stroke-width="1.1"/><circle cx="926" cy="81.6" r="0.75" fill="#2266e3"/><circle cx="1095.2" cy="75.8" r="4.4" fill="none" stroke="#2266e3" stroke-width="1.2"/><path d="M1092,79 L1085.8,84.8" stroke="#2266e3" stroke-width="1.2" fill="none"/><g fill="none" stroke="#2266e3" stroke-width="1.1" stroke-linejoin="round"><path d="M1684.6,77.9 L1692.6,69.9 L1700.6,77.9 L1692.6,85.9 Z"/><path d="M1688.6,73.9 L1696.6,81.9 M1696.6,73.9 L1688.6,81.9"/></g><path d="M1723.7,74.4 L1730.6,70.8 V73.6 L1727,75 V81.2 L1730.6,82.8 V85.5 L1723.7,82.4 Z" fill="#2266e3"/><path d="M1730.6,71 L1735.6,72.4 V84 L1730.6,85.3 Z" fill="#fff" stroke="#2266e3" stroke-width="1.1" stroke-linejoin="round"/><path d="M1769.9,78 V83 C1769.9,84.6 1768.6,85.5 1766.9,85.5 C1765.1,85.5 1763.9,84.6 1763.9,83 V72.4 C1763.9,71.2 1764.6,70.5 1765.6,70.5 C1766.6,70.5 1767.3,71.2 1767.3,72.4 V82.4 C1767.3,83.3 1766.4,83.3 1766.4,82.4" fill="none" stroke="#2266e3" stroke-width="1.05"/><circle cx="1774.6" cy="72.4" r="8.5" fill="#2266e3"/><path d="M1800.2,71.6 C1795.6,74.6 1795,80.4 1798.4,83.6 C1801.8,86.8 1807.6,86 1810.2,82.2 C1812.6,78.6 1811.2,73 1806.6,71" fill="none" stroke="#2266e3" stroke-width="1.2"/><path d="M1797.2,71.6 H1800.6 V75" fill="none" stroke="#2266e3" stroke-width="1.2"/><path d="M1840,74.6 H1833.2 V82.5 H1845.8 V77.6 M1841.2,77.6 L1847.4,72.4 M1843.2,72.3 H1847.5 V76.4" fill="none" stroke="#2266e3" stroke-width="1.2"/><path d="M234.4,149.8 L239.8,155.2 L245.2,149.8" fill="none" stroke="#242424" stroke-width="1.2"/><circle cx="88.4" cy="190" r="3.9" fill="none" stroke="#605e5c" stroke-width="1.1"/><path d="M85.6,192.9 L80.4,198.2" stroke="#605e5c" stroke-width="1.1" fill="none"/><path d="M483.6,193.4 L488,197.8 L496.6,188.6" fill="none" stroke="#fff" stroke-width="1.4"/><circle cx="95" cy="232" r="8.5" fill="none" stroke="#242424" stroke-width="1"/><circle cx="95" cy="265" r="8.5" fill="none" stroke="#605e5c" stroke-width="1"/><path d="M540.6,237 V226.2 M538.2,228.8 L540.6,226.2 L543,228.8" fill="none" stroke="#605e5c" stroke-width="1"/><circle cx="1842.6" cy="227" r="0.95" fill="#242424"/><circle cx="1842.6" cy="232" r="0.95" fill="#242424"/><circle cx="1842.6" cy="237" r="0.95" fill="#242424"/></svg>
<span class="t" style="left:70.50px;top:15.96px;font-size:16px;letter-spacing:-0.034px;color:#ffffff;-webkit-text-stroke:0.55px #ffffff;">Finance and Operations Preview</span><span class="t" style="left:359.25px;top:19.02px;font-size:12.5px;letter-spacing:-0.650px;color:#ffffff;">Cepheo</span><span class="t" style="left:401.50px;top:18.01px;font-size:10.5px;color:#ffffff;">®</span><span class="t" style="left:447.50px;top:19.02px;font-size:12.5px;letter-spacing:-0.182px;color:#ffffff;">Integrations</span><span class="t" style="left:547.00px;top:19.02px;font-size:12.5px;letter-spacing:-0.500px;color:#ffffff;">Payroll</span><span class="t" style="left:618.00px;top:19.02px;font-size:12.5px;letter-spacing:-0.240px;color:#ffffff;">Payroll registration hours</span><span class="t" style="left:1586.75px;top:18.32px;font-size:13.8px;letter-spacing:-1.417px;color:#ffffff;">USSI</span><span class="t" style="left:1887.00px;top:17.37px;font-size:13.5px;letter-spacing:-1.000px;color:#1f3566;">AD</span><span class="t" style="left:1702.00px;top:13.69px;font-size:9.7px;">2</span><span class="t" style="left:130.80px;top:72.57px;font-size:13.5px;letter-spacing:-0.400px;">Edit</span><span class="t" style="left:196.00px;top:72.57px;font-size:13.5px;color:#a6a6a6;">New</span><span class="t" style="left:266.00px;top:72.57px;font-size:13.5px;">Delete</span><span class="t" style="left:348.00px;top:72.57px;font-size:13.5px;letter-spacing:0.154px;">Retrieve hour registrations</span><span class="t" style="left:553.00px;top:72.57px;font-size:13.5px;">Export selected lines</span><span class="t" style="left:720.75px;top:72.57px;font-size:13.5px;letter-spacing:0.143px;">Export lines with the same id</span><span class="t" style="left:940.00px;top:72.57px;font-size:13.5px;letter-spacing:0.350px;">How to</span><span class="t" style="left:1006.75px;top:72.57px;font-size:13.5px;letter-spacing:0.417px;-webkit-text-stroke:0.45px #242424;">Options</span><span class="t" style="left:1771.70px;top:67.57px;font-size:10.2px;color:#ffffff;-webkit-text-stroke:0.3px #ffffff;">0</span><span class="t" style="left:75.50px;top:112.57px;font-size:13.5px;letter-spacing:0.206px;">Hour registrations</span><span class="t" style="left:75.50px;top:138.54px;font-size:23.7px;letter-spacing:0.125px;-webkit-text-stroke:0.8px #242424;">Standard view</span><span class="t" style="left:100.50px;top:186.57px;font-size:13.5px;color:#8a8886;">Filter</span><span class="t" style="left:357.00px;top:186.57px;font-size:13.5px;letter-spacing:-0.357px;color:#ffffff;">Flex HRM</span><span class="t" style="left:506.00px;top:186.07px;font-size:13.5px;">Show all</span><span class="t" style="left:119.50px;top:227.44px;font-size:12px;letter-spacing:-0.500px;-webkit-text-stroke:0.35px #242424;">ID</span><span class="t" style="left:340.00px;top:227.44px;font-size:12px;letter-spacing:0.100px;-webkit-text-stroke:0.35px #242424;">Created date and time</span><span class="t" style="left:561.00px;top:227.44px;font-size:12px;-webkit-text-stroke:0.35px #242424;">Created by</span><span class="t" style="left:722.00px;top:227.44px;font-size:12px;letter-spacing:0.107px;-webkit-text-stroke:0.35px #242424;">Exported</span><span class="t" style="left:823.75px;top:227.44px;font-size:12px;letter-spacing:-0.325px;-webkit-text-stroke:0.35px #242424;">Resource ID</span><span class="t" style="left:924.00px;top:227.44px;font-size:12px;letter-spacing:-0.429px;-webkit-text-stroke:0.35px #242424;">Resource</span><span class="t" style="left:1145.50px;top:227.44px;font-size:12px;letter-spacing:-0.333px;-webkit-text-stroke:0.35px #242424;">User ID</span><span class="t" style="left:1246.00px;top:227.44px;font-size:12px;letter-spacing:-0.167px;-webkit-text-stroke:0.35px #242424;">Date</span><span class="t" style="left:1407.50px;top:227.44px;font-size:12px;letter-spacing:-0.115px;-webkit-text-stroke:0.35px #242424;">Transaction ID</span><span class="t" style="left:1508.00px;top:227.44px;font-size:12px;letter-spacing:0.091px;-webkit-text-stroke:0.35px #242424;">Legal entity</span><span class="t" style="left:1609.00px;top:227.44px;font-size:12px;letter-spacing:0.118px;-webkit-text-stroke:0.35px #242424;">Transaction origin</span><span class="t" style="left:1770.00px;top:227.44px;font-size:12px;letter-spacing:-0.143px;-webkit-text-stroke:0.35px #242424;">Pay type</span><span class="t" style="left:74.25px;top:934.84px;font-size:12px;letter-spacing:-0.028px;color:#605e5c;-webkit-text-stroke:0.3px #605e5c;">Project ID</span><span class="t" style="left:80.00px;top:959.57px;font-size:13.5px;">00000092</span><span class="t" style="left:247.00px;top:934.84px;font-size:12px;letter-spacing:0.107px;color:#605e5c;-webkit-text-stroke:0.3px #605e5c;">Category</span><span class="t" style="left:253.25px;top:959.57px;font-size:13.5px;letter-spacing:-0.750px;">PM</span><span class="t" style="left:477.00px;top:934.84px;font-size:12px;letter-spacing:0.208px;color:#605e5c;-webkit-text-stroke:0.3px #605e5c;">Line property</span><span class="t" style="left:483.25px;top:959.57px;font-size:13.5px;letter-spacing:0.107px;">Billable</span><span class="t" style="left:592.50px;top:934.84px;font-size:12px;letter-spacing:0.125px;color:#605e5c;-webkit-text-stroke:0.3px #605e5c;">Description</span><span class="t" style="left:598.25px;top:959.57px;font-size:13.5px;letter-spacing:0.083px;">test</span><span class="t" style="left:822.50px;top:934.84px;font-size:12px;letter-spacing:-0.333px;color:#605e5c;-webkit-text-stroke:0.3px #605e5c;">Absence</span><span class="t" style="left:872.50px;top:958.57px;font-size:13.5px;letter-spacing:0.500px;color:#605e5c;">No</span>
</body></html>
